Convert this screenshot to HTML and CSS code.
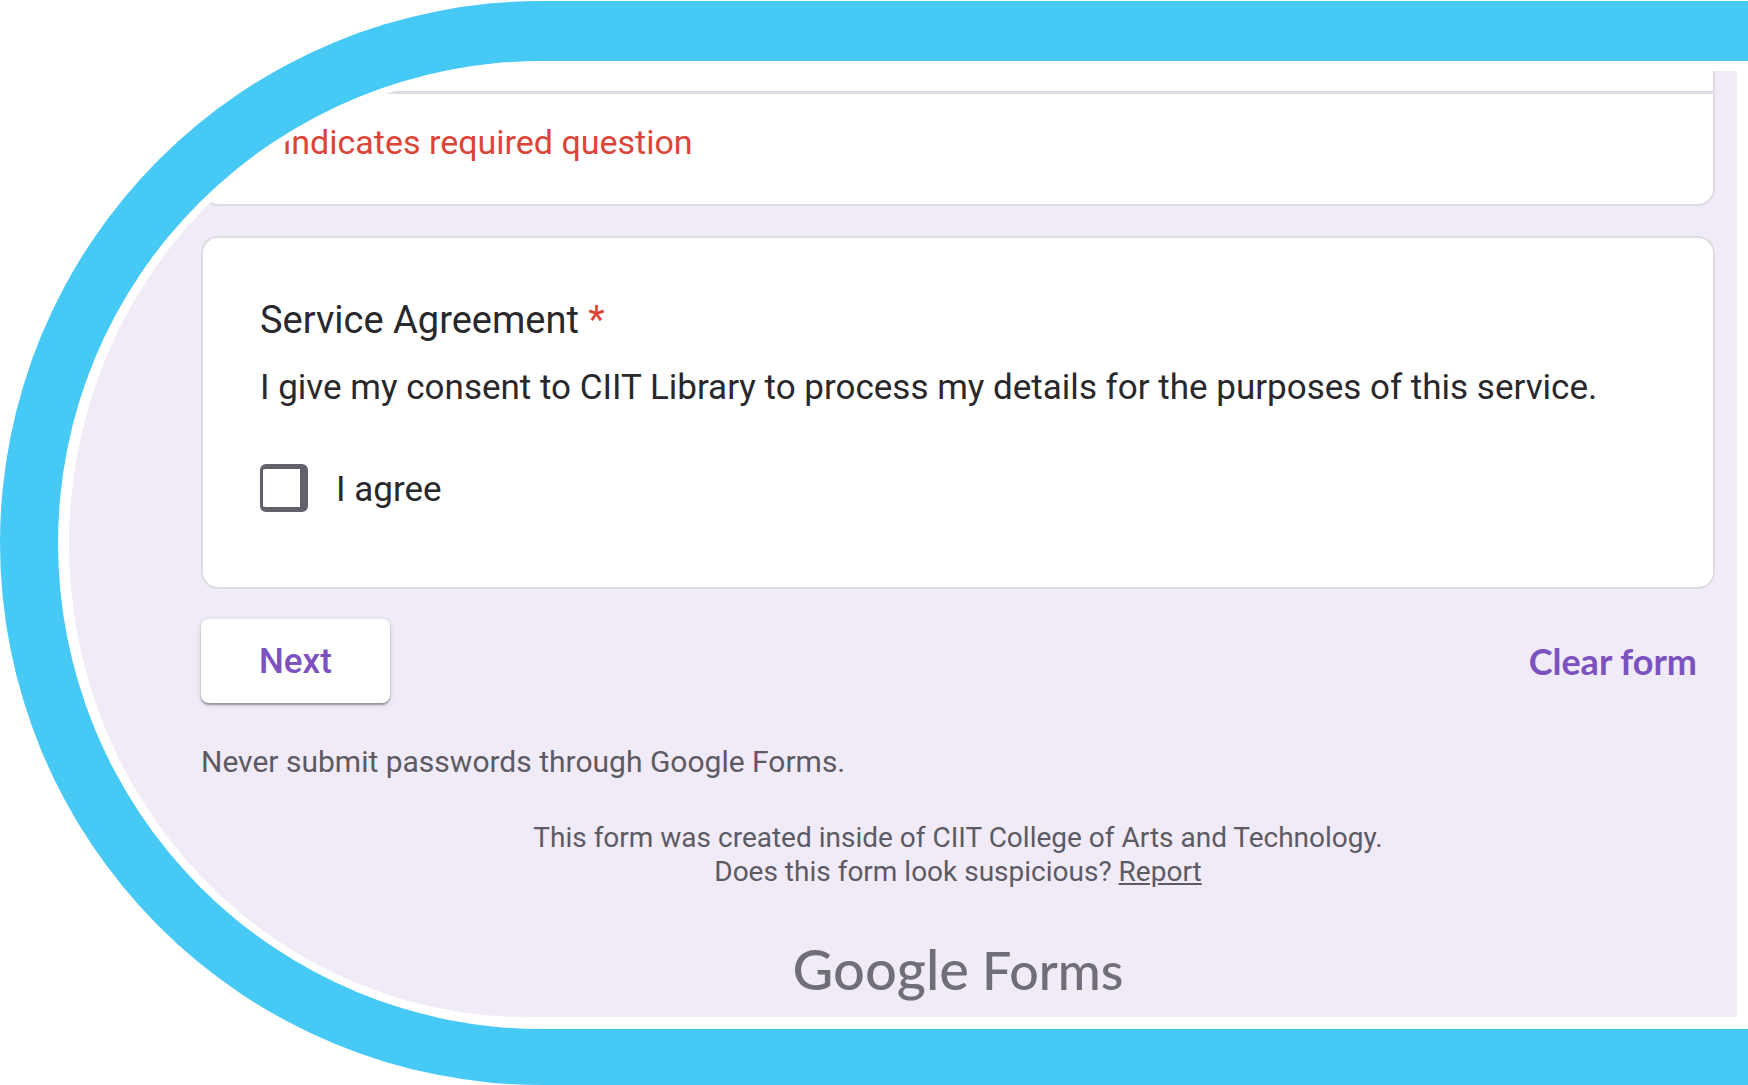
FILE: index.html
```html
<!DOCTYPE html>
<html lang="en">
<head>
	<meta charset="UTF-8">
	<meta name="viewport" content="width=device-width, initial-scale=1.0">
	<title>Service Agreement</title>
	<link rel="stylesheet" href="styles.css">
</head>
<body>
	<div class="frame">
		<main class="screen">
			<form class="form">
				<section class="card card--header">
					<p class="required-note">* indicates required question</p>
				</section>

				<section class="card card--question">
					<h1 class="question-title">Service Agreement <span class="required">*</span></h1>
					<p class="question-text">I give my consent to CIIT Library to process my details for the purposes of this service.</p>
					<label class="option"><input type="checkbox" name="agree" required> I agree</label>
				</section>

				<div class="actions">
					<button type="button" class="button button--next">Next</button>
					<button type="reset" class="button button--clear">Clear form</button>
				</div>
			</form>

			<footer>
				<p class="warning">Never submit passwords through Google Forms.</p>
				<p class="notice">
					This form was created inside of CIIT College of Arts and Technology.<br>
					Does this form look suspicious? <a href="#report">Report</a>
				</p>
				<div class="logo"><span class="logo-google">Google</span> Forms</div>
			</footer>
		</main>
	</div>
</body>
</html>
```
FILE: styles.css
```css
* {
	box-sizing: border-box;
}

body {
	margin: 0;
	padding-top: 1px;
	background: #fff;
	color: #28282d;
	font-family: Roboto, sans-serif;
	font-size: 35px;
	line-height: 48px;
}

h1,
p {
	margin: 0;
	font-weight: 400;
}

/* blue ring, open on the right */
.frame {
	display: flex;
	min-height: calc(100vh - 1px);
	padding: 10px 11px 12px 11px;
	border: solid #47c9f6;
	border-width: 60px 0 56px 58px;
	border-radius: 542px 0 0 542px;
	overflow: hidden;
}

.screen {
	flex: 1;
	padding: 0 22px 0 132px;
	background: #f0ebf7;
	border-radius: 458px 0 0 458px / 473px 0 0 473px;
	overflow: hidden;
}

.card {
	background: #fff;
	border: 2px solid #dddce3;
	border-radius: 17px;
}

.card--header {
	margin-bottom: 30px;
	padding: 20px 0 0;
	border-top: 0;
	border-top-left-radius: 0;
	border-top-right-radius: 0;
}

.required-note {
	padding: 24px 57px 38px;
	border-top: 3px solid #dddce3;
	color: #db4437;
	font-size: 34px;
}

.card--question {
	padding: 58px 57px 71px;
}

.question-title {
	font-size: 38px;
}

.required {
	color: #db4437;
}

.question-text {
	margin: 20px 0 52px;
}

.option {
	display: flex;
	gap: 28px;
	line-height: 52px;
}

.option input {
	appearance: none;
	width: 48px;
	height: 48px;
	margin: 0;
	border: solid #62606b;
	border-width: 5px 8px 5px 3px;
	border-radius: 6px;
}

.option input:checked {
	background: #673ab7;
}

.actions {
	display: flex;
	justify-content: space-between;
	margin-top: 30px;
}

.button {
	height: 84px;
	border: 0;
	background: none;
	color: #7b52bf;
	cursor: pointer;
}

.button--next {
	padding: 0 58px;
	border-radius: 8px;
	background: #fff;
	box-shadow: 0 2px 2px rgba(0, 0, 0, 0.35), 0 1px 6px rgba(60, 40, 120, 0.12);
	font: 500 35px Roboto, sans-serif;
}

.button--clear {
	padding: 0 18px;
	font: 700 36px Lato, sans-serif;
}

footer {
	color: #5c5a63;
	font-size: 28px;
	line-height: 34px;
}

.warning {
	margin: 42px 0;
	font-size: 30px;
}

.notice {
	text-align: center;
}

.notice a {
	color: inherit;
}

.logo {
	margin-top: 48px;
	color: #706e77;
	font: 500 52px/64px Lato, sans-serif;
	text-align: center;
}

.logo-google {
	font-size: 56px;
}
```
